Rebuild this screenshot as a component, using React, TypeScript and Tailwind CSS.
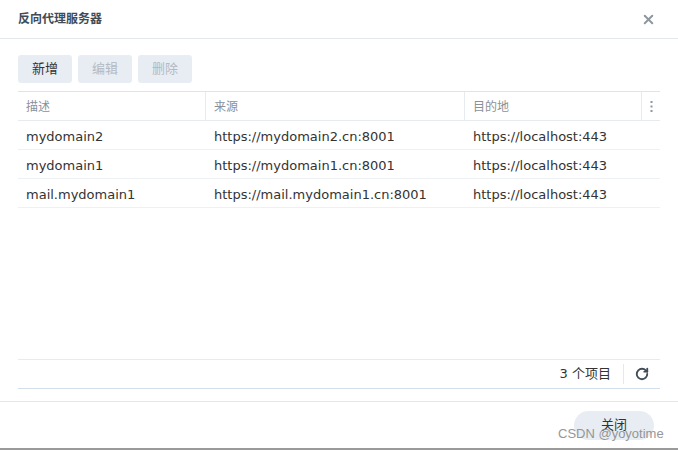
import { X, RotateCw } from 'lucide-react';

const rows = [
    { desc: 'mydomain2', src: 'https://mydomain2.cn:8001', dst: 'https://localhost:443' },
    { desc: 'mydomain1', src: 'https://mydomain1.cn:8001', dst: 'https://localhost:443' },
    { desc: 'mail.mydomain1', src: 'https://mail.mydomain1.cn:8001', dst: 'https://localhost:443' },
];

const font = "font-['DejaVu_Sans','Noto_Sans_CJK_SC',sans-serif]";

export default function App() {
    return (
        <div className={`relative flex flex-col w-[678px] h-[450px] bg-white border-b-2 border-[#9a9a9a] text-[#333] ${font}`}>
            {/* title bar */}
            <div className="flex items-center justify-between h-[39px] pl-[18px] pr-[22px] border-b border-[#e3e8ee] shrink-0">
                <span className="text-[12px] font-bold text-[#414b55]">反向代理服务器</span>
                <X className="w-[15px] h-[15px] text-[#8e969e]" strokeWidth={3.2} />
            </div>

            <div className="flex flex-col flex-1 px-[18px] pt-4 min-h-0">
                {/* toolbar */}
                <div className="flex gap-[6px] shrink-0">
                    <button className="w-[54px] h-[28px] rounded-[3px] bg-[#e8edf4] text-[13px] text-[#333]">新增</button>
                    <button className="w-[54px] h-[28px] rounded-[3px] bg-[#e8edf4] text-[13px] text-[#b3bac2]">编辑</button>
                    <button className="w-[54px] h-[28px] rounded-[3px] bg-[#e8edf4] text-[13px] text-[#b3bac2]">删除</button>
                </div>

                {/* grid */}
                <div className="flex flex-col flex-1 mt-2 border-t border-[#dfe4ea] min-h-0">
                    <div className="flex h-[29px] border-b border-[#e6ebf0] text-[12px] text-[#8a9199] shrink-0">
                        <div className="w-[188px] flex items-center pl-2 pt-[2px] border-r border-[#e6ebf0]">描述</div>
                        <div className="w-[259px] flex items-center pl-2 pt-[2px] border-r border-[#e6ebf0]">来源</div>
                        <div className="w-[177px] flex items-center pl-2 pt-[2px] border-r border-[#e6ebf0]">目的地</div>
                        <div className="flex-1 flex items-center justify-center">
                            <svg width="3" height="11" viewBox="0 0 3 11" className="fill-[#8e969e]">
                                <rect x="0.5" y="0" width="2" height="2" />
                                <rect x="0.5" y="4.5" width="2" height="2" />
                                <rect x="0.5" y="9" width="2" height="2" />
                            </svg>
                        </div>
                    </div>
                    <div className="flex-1 min-h-0">
                        {rows.map((r) => (
                            <div key={r.desc} className="flex h-[29px] border-b border-[#eef1f4] text-[13px] text-[#333] pt-[3px]">
                                <div className="w-[188px] flex items-center pl-2">{r.desc}</div>
                                <div className="w-[259px] flex items-center pl-2">{r.src}</div>
                                <div className="flex-1 flex items-center pl-2">{r.dst}</div>
                            </div>
                        ))}
                    </div>
                    <div className="flex items-center justify-end h-[30px] border-t border-[#e8ebee] border-b border-b-[#d3e0eb] shrink-0">
                        <span className="text-[13px] text-[#333] pr-[12px]">3 个项目</span>
                        <div className="w-px h-[20px] bg-[#e6e9ec]" />
                        <div className="w-[36px] flex items-center justify-center">
                            <RotateCw className="w-[14px] h-[14px] text-[#414b55]" strokeWidth={3.2} />
                        </div>
                    </div>
                </div>
            </div>

            {/* footer */}
            <div className="flex items-center justify-end h-[47px] mt-[12px] pr-[24px] border-t border-[#e4e7ea] shrink-0">
                <button className="w-[80px] h-[29px] rounded-full bg-[#e8edf4] text-[13px] text-[#333]">关闭</button>
            </div>

            <span className="absolute left-[558px] top-[424px] text-[13px] text-[#8c8c8c] font-['Liberation_Sans',sans-serif] opacity-90">
                CSDN @yoyotime
            </span>
        </div>
    );
}
